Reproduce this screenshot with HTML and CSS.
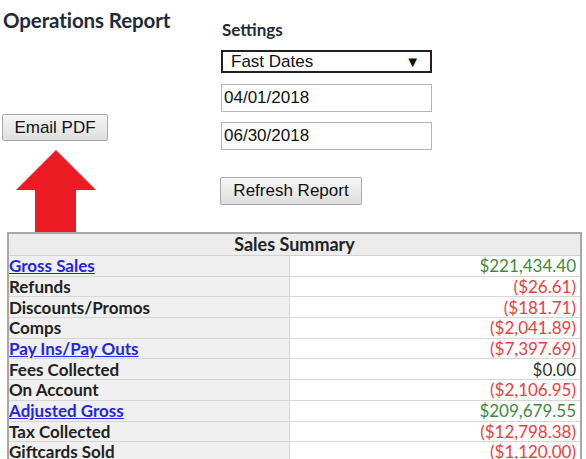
FILE: index.html
```html
<!DOCTYPE html>
<html>
<head>
<meta charset="utf-8">
<link rel="stylesheet" href="styles.css">
</head>
<body>
<div class="top">
  <div class="left-col">
    <h1 class="title">Operations Report</h1>
    <button class="btn btn-email">Email PDF</button>
    <svg class="arrow" width="110" height="82" viewBox="0 0 110 82">
      <polygon points="56,0 96,40 76,40 76,82 35,82 35,40 16,40" fill="#ed1c24"/>
    </svg>
  </div>
  <div class="settings">
    <div class="settings-label">Settings</div>
    <div class="select"><span>Fast Dates</span><span class="caret">&#9660;</span></div>
    <input class="field field-first" type="text" value="04/01/2018">
    <input class="field field-second" type="text" value="06/30/2018">
    <button class="btn btn-refresh">Refresh Report</button>
  </div>
</div>
<table class="summary">
  <tr><th colspan="2">Sales Summary</th></tr>
  <tr><td class="label"><a href="#">Gross Sales</a></td><td class="val pos">$221,434.40</td></tr>
  <tr><td class="label">Refunds</td><td class="val neg">($26.61)</td></tr>
  <tr><td class="label">Discounts/Promos</td><td class="val neg">($181.71)</td></tr>
  <tr><td class="label">Comps</td><td class="val neg">($2,041.89)</td></tr>
  <tr><td class="label"><a href="#">Pay Ins/Pay Outs</a></td><td class="val neg">($7,397.69)</td></tr>
  <tr><td class="label">Fees Collected</td><td class="val zero">$0.00</td></tr>
  <tr><td class="label">On Account</td><td class="val neg">($2,106.95)</td></tr>
  <tr><td class="label"><a href="#">Adjusted Gross</a></td><td class="val pos">$209,679.55</td></tr>
  <tr><td class="label">Tax Collected</td><td class="val neg">($12,798.38)</td></tr>
  <tr><td class="label">Giftcards Sold</td><td class="val neg">($1,120.00)</td></tr>
</table>
</body>
</html>
```
FILE: styles.css
```css
html, body {
  margin: 0;
  padding: 0;
  background: #fff;
  overflow: hidden;
}
body {
  font-family: Lato, "Open Sans", sans-serif;
  color: #222;
}
.top {
  display: flex;
  height: 232px;
}
.left-col {
  width: 220px;
  display: flex;
  flex-direction: column;
  align-items: flex-start;
}
.title {
  margin: 0;
  padding: 8px 0 0 3px;
  font-size: 20.5px;
  line-height: 24px;
  font-weight: bold;
  color: #1f2a3a;
  letter-spacing: -0.1px;
}
.btn {
  font-family: "Liberation Sans", Arial, sans-serif;
  font-size: 17px;
  color: #111;
  background: linear-gradient(#f6f6f6, #dedede);
  border: 1px solid #a9a9a9;
  border-radius: 2px;
  padding: 0;
  box-sizing: border-box;
}
.btn-email {
  margin: 82px 0 0 2px;
  width: 106px;
  height: 27px;
}
.arrow {
  display: block;
  margin-top: 9px;
}
.settings {
  display: flex;
  flex-direction: column;
  align-items: flex-start;
}
.settings-label {
  padding-top: 20px;
  font-size: 17px;
  line-height: 20px;
  font-weight: bold;
  color: #1f2a3a;
  margin-left: 2px;
}
.select {
  margin: 10px 0 0 1px;
  width: 211px;
  height: 23px;
  box-sizing: border-box;
  border: 2px solid #222;
  display: flex;
  align-items: center;
  justify-content: space-between;
  padding: 0 10px 0 8px;
  font-family: "Liberation Sans", Arial, sans-serif;
  font-size: 17px;
  color: #111;
}
.caret {
  font-size: 15px;
  line-height: 1;
}
.field {
  margin: 11px 0 0 1px;
  width: 211px;
  height: 28px;
  box-sizing: border-box;
  border: 1px solid #b5b5b5;
  padding: 0 2px;
  font-family: "Liberation Sans", Arial, sans-serif;
  font-size: 17px;
  color: #111;
  outline: none;
}
.field-second {
  margin-top: 10px;
}
.btn-refresh {
  margin-top: 27px;
  width: 142px;
  height: 28px;
}
.summary {
  margin-left: 7px;
  width: 575px;
  border-collapse: collapse;
  border: 2px solid #a8a8a8;
  font-size: 17px;
}
.summary th {
  background: #ececec;
  height: 21px;
  padding: 0;
  font-size: 18px;
  font-weight: bold;
  line-height: 19px;
  color: #222;
  border: 1px solid #d0d0d0;
}
.summary td {
  padding: 0 4px 0 0;
  height: 20.7px;
  line-height: 19px;
  border: 1px solid #d6d6d6;
  box-sizing: border-box;
}
.label {
  width: 281px;
  background: #f0f0f0;
  font-weight: bold;
  color: #222;
}
.label a {
  color: #2525e6;
  text-decoration: underline;
}
.val {
  text-align: right;
  background: #fff;
}
.pos { color: #3c8a3c; }
.neg { color: #ee3d3d; }
.zero { color: #333; }
```
